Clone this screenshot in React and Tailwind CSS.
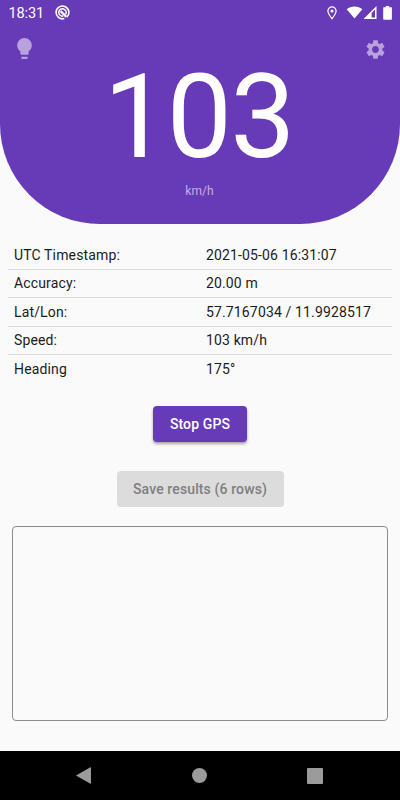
const rows = [
  { label: 'UTC Timestamp:', value: '2021-05-06 16:31:07' },
  { label: 'Accuracy:', value: '20.00 m' },
  { label: 'Lat/Lon:', value: '57.7167034 / 11.9928517' },
  { label: 'Speed:', value: '103 km/h' },
  { label: 'Heading', value: '175°' },
];

// Android status bar
function StatusBar() {
  return (
    <div className="flex h-[25px] items-center pl-[8.5px] pr-2 text-white">
      <span className="pt-[2px] text-[14.5px] leading-[25px] tracking-[-0.1px]">18:31</span>
      <svg className="ml-[11px]" width="15" height="15" viewBox="0 0 15 15" fill="none" stroke="currentColor">
        <path d="M11.800 12.200A6.400 6.400 0 1 0 9.300 13.600" strokeWidth="1.600" />
        <path d="M8.200 11.100A3.700 3.700 0 1 1 10.700 9.300" strokeWidth="1.500" />
        <path d="M5.500 6L11.300 11.800" strokeWidth="2.400" />
      </svg>
      <div className="ml-auto flex items-center">
        <svg width="10" height="14" viewBox="0 0 10 14" fill="none" stroke="currentColor">
          <path d="M5 12.700C3 10.100 .9 7.400 .9 5a4.100 4.100 0 0 1 8.200 0C9.100 7.400 7 10.100 5 12.700z" strokeWidth="1.200" />
          <circle cx="5" cy="5" r="1.6" fill="currentColor" stroke="none" />
        </svg>
        <svg className="ml-[9px]" width="17" height="13" viewBox="0 0 17 13" fill="currentColor">
          <path d="M.7 3.300C5 -.3 12 -.3 16.300 3.300L8.500 12.600z" />
        </svg>
        <svg width="14" height="13" viewBox="0 0 14 13" fill="currentColor">
          <path fillRule="evenodd" d="M13.500 0V13H.5zM12 3.600L8.600 7V11.500H12z" />
        </svg>
        <svg className="ml-[6px]" width="9" height="14" viewBox="0 0 9 14" fill="currentColor">
          <path d="M2.800 0h3.400v1.300H8.400q.5 0 .5.5V13q0 .7-.7.7H.9Q.2 13.700 .2 13V1.800q0-.5.5-.5h2.100z" />
        </svg>
      </div>
    </div>
  );
}

function SpeedHeader() {
  return (
    <header className="h-[224px] rounded-b-[100px] bg-[#673ab7]">
      <StatusBar />
      <div className="flex h-[47px] items-center justify-between pl-3 pr-[13px] text-[#b8a1dd]">
        <button aria-label="Toggle light">
          <svg width="25" height="25" viewBox="0 0 24 24" fill="currentColor">
            <path d="M9 21c0 .55.45 1 1 1h4c.55 0 1-.45 1-1v-1H9v1zm3-19C8.140 2 5 5.140 5 9c0 2.380 1.190 4.470 3 5.740V17c0 .55.45 1 1 1h6c.55 0 1-.45 1-1v-2.260c1.810-1.270 3-3.360 3-5.740 0-3.860-3.140-7-7-7z" />
          </svg>
        </button>
        <button aria-label="Settings" className="pt-px">
          <svg width="23" height="23" viewBox="0 0 24 24" fill="currentColor">
            <path d="M19.140 12.940c.040-.300.060-.610.060-.940 0-.320-.020-.640-.070-.940l2.030-1.580c.180-.140.230-.410.120-.610l-1.920-3.320c-.120-.220-.370-.290-.590-.220l-2.390.960c-.500-.380-1.030-.700-1.620-.940l-.360-2.540c-.040-.240-.240-.410-.480-.410h-3.840c-.240 0-.430.170-.470.410l-.360 2.540c-.590.240-1.130.570-1.620.940l-2.390-.960c-.220-.080-.470 0-.590.220L2.740 8.870c-.120.210-.080.470.120.610l2.030 1.580c-.050.300-.090.630-.090.940s.020.640.070.940l-2.030 1.580c-.180.140-.230.410-.120.610l1.920 3.320c.120.220.370.290.590.220l2.390-.960c.500.380 1.030.700 1.620.940l.360 2.540c.050.240.240.410.480.410h3.840c.240 0 .440-.170.470-.410l.360-2.540c.590-.240 1.130-.560 1.620-.940l2.390.960c.220.080.470 0 .590-.220l1.920-3.320c.120-.220.070-.470-.120-.610l-2.010-1.580zM12 15.600c-1.980 0-3.600-1.620-3.600-3.600s1.620-3.600 3.600-3.600 3.600 1.620 3.600 3.600-1.620 3.600-3.600 3.600z" />
          </svg>
        </button>
      </div>
      <div className="-mt-[23px] pr-[3px] text-center text-[116px] leading-[136px] tracking-[-1.8px] text-white">103</div>
      <p className="-mt-[2px] pr-px text-center text-[12px] leading-4 tracking-[0.1px] text-[#c2b0e2]">km/h</p>
    </header>
  );
}

export default function App() {
  return (
    <div className="flex h-[800px] w-[400px] flex-col overflow-hidden bg-[#fafafa] font-['Roboto',sans-serif]">
      <SpeedHeader />

      {/* GPS readings */}
      <div className="mx-2 mt-[17px] divide-y divide-[#dadada] text-[14px] tracking-[0.14px] text-[#1c1c1c]">
        {rows.map((row) => (
          <div key={row.label} className="grid h-[28.5px] grid-cols-2 items-center pt-px">
            <span className="pl-[6px]">{row.label}</span>
            <span className="pl-[6px]">{row.value}</span>
          </div>
        ))}
      </div>

      {/* Actions */}
      <div className="mt-[22px] flex flex-col items-center gap-[29px] text-[14px] font-medium tracking-[0.12px]">
        <button className="h-9 w-[94px] rounded bg-[#673ab7] pt-px text-white shadow-[0_2px_3px_rgba(0,0,0,0.35)]">
          Stop GPS
        </button>
        <button disabled className="h-9 w-[167px] rounded bg-[#dcdcdc] pt-px text-[#7f7f7f]">
          Save results (6 rows)
        </button>
      </div>

      {/* Log output */}
      <div className="mx-3 mt-[19px] h-[195px] rounded-[4px] border border-[#8c8c8c]"></div>

      {/* Android navigation bar */}
      <nav className="mt-auto flex h-[49px] items-center justify-between bg-black pl-[76px] pr-[77px] text-[#9b9b9b]">
        <svg width="15" height="17" viewBox="0 0 15 17" fill="currentColor">
          <path d="M0 8.500L14 .5Q15 0 15 1V16Q15 17 14 16.500z" />
        </svg>
        <div className="h-[15px] w-[15px] rounded-full bg-[#9b9b9b]"></div>
        <div className="h-4 w-4 rounded-[1px] bg-[#9b9b9b]"></div>
      </nav>
    </div>
  );
}
